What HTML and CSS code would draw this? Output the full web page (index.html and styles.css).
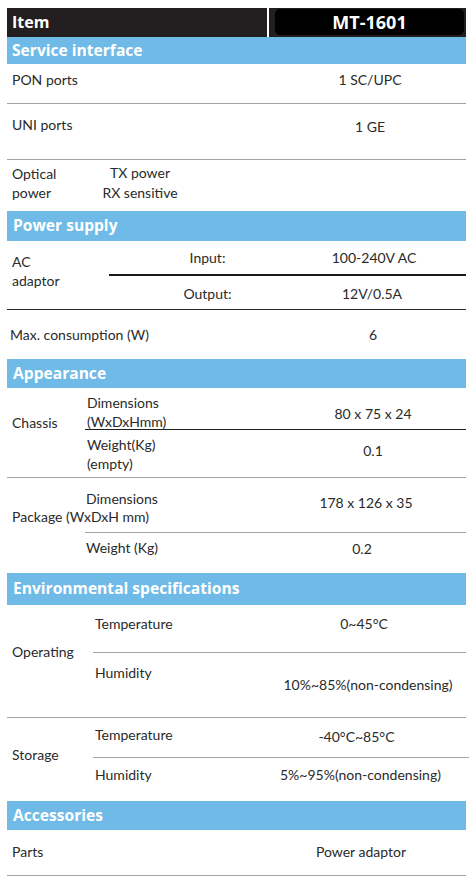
FILE: index.html
```html
<!DOCTYPE html>
<html lang="en">
<head>
<meta charset="utf-8">
<title>MT-1601 Specifications</title>
<link rel="stylesheet" href="styles.css">
</head>
<body>
<div class="sheet">
  <div class="head">
    <div class="head-item">Item</div>
    <div class="head-model"><div class="model-box">MT-1601</div></div>
  </div>

  <div class="bar bar-service">Service interface</div>
  <div class="row row-pon ruled">
    <div class="lab">PON ports</div>
    <div class="val c370">1 SC/UPC</div>
  </div>
  <div class="row row-uni ruled">
    <div class="lab">UNI ports</div>
    <div class="val c370">1 GE</div>
  </div>
  <div class="block block-optical">
    <div class="lab two">Optical<br>power</div>
    <div class="sub two">TX power<br>RX sensitive</div>
  </div>

  <div class="bar bar-power">Power supply</div>
  <div class="block block-ac ruled-dark">
    <div class="lab span2">AC<br>adaptor</div>
    <div class="sub io in heavy">Input:</div>
    <div class="val c374 in heavy">100-240V AC</div>
    <div class="sub io out">Output:</div>
    <div class="val c372 out">12V/0.5A</div>
  </div>
  <div class="row row-max">
    <div class="lab">Max. consumption (W)</div>
    <div class="val c373">6</div>
  </div>

  <div class="bar bar-appear">Appearance</div>
  <div class="block block-chassis ruled">
    <div class="lab span2">Chassis</div>
    <div class="sub dims dark-line">Dimensions<br>(WxDxHmm)</div>
    <div class="val c373 dims-val dark-line">80 x 75 x 24</div>
    <div class="sub wt">Weight(Kg)<br>(empty)</div>
    <div class="val c373 wt-val">0.1</div>
  </div>
  <div class="block block-package">
    <div class="lab pkg">Package (WxDxH mm)</div>
    <div class="sub dims light-line">Dimensions</div>
    <div class="val c366 dims-val light-line">178 x 126 x 35</div>
    <div class="sub wt">Weight (Kg)</div>
    <div class="val c362 wt-val">0.2</div>
  </div>

  <div class="bar bar-env">Environmental specifications</div>
  <div class="block block-env block-operating ruled">
    <div class="lab span2">Operating</div>
    <div class="sub t light-line">Temperature</div>
    <div class="val c364 t-val light-line">0~45°C</div>
    <div class="sub h">Humidity</div>
    <div class="val c368 h-val">10%~85%(non-condensing)</div>
  </div>
  <div class="block block-env block-storage">
    <div class="lab span2">Storage</div>
    <div class="sub t light-line">Temperature</div>
    <div class="val c355 t-val light-line">-40°C~85°C</div>
    <div class="sub h">Humidity</div>
    <div class="val c359 h-val">5%~95%(non-condensing)</div>
  </div>

  <div class="bar bar-acc">Accessories</div>
  <div class="row row-parts ruled">
    <div class="lab">Parts</div>
    <div class="val c361">Power adaptor</div>
  </div>
</div>
</body>
</html>
```

FILE: styles.css
```css
* { box-sizing: border-box; }

html, body {
  margin: 0;
  padding: 0;
  background: #ffffff;
}

body {
  font-family: "Lato", "Liberation Sans", sans-serif;
  font-size: 14px;
  color: #2a2a2a;
}

.sheet {
  width: 459px;
  margin: 8px 0 0 7px;
}

/* ---------- header ---------- */
.head {
  display: flex;
  gap: 2px;
  height: 29px;
  font-family: "Open Sans", "DejaVu Sans", sans-serif;
  font-weight: 700;
  color: #ffffff;
}

.head-item {
  width: 260px;
  background: #231f20;
  padding-left: 5px;
  font-size: 16px;
  line-height: 29px;
}

.head-model {
  flex: 1;
  background: #231f20;
  padding: 1px 2px 2px 6px;
}

.model-box {
  height: 100%;
  background: #000000;
  border-radius: 5px;
  text-align: center;
  font-size: 18px;
  line-height: 26px;
}

/* ---------- section bars ---------- */
.bar {
  background: #6fbae6;
  color: #ffffff;
  font-family: "Open Sans", "DejaVu Sans", sans-serif;
  font-weight: 700;
  font-size: 15.6px;
  padding-left: 6px;
}

.bar-service { height: 27px; line-height: 26px; padding-left: 5px; }
.bar-power   { height: 30px; line-height: 29px; }
.bar-appear  { height: 29px; line-height: 28px; }
.bar-env     { height: 32px; line-height: 31px; }
.bar-acc     { height: 29px; line-height: 28px; }

/* ---------- generic rows ---------- */
.row {
  display: grid;
  grid-template-columns: 273px 1fr;
  line-height: 18px;
}

.ruled { border-bottom: 1px solid #a3a3a3; }
.ruled-dark { border-bottom: 1px solid #2a2a2a; }

.lab { padding-left: 5px; white-space: nowrap; }
.lab.two { line-height: 19px; }

.val {
  text-align: center;
  white-space: nowrap;
  padding-right: 14px;
}

/* value centre positions (column spans x 280–466) */
.c373 { padding-left: 0; padding-right: 0; }
.c374 { padding-left: 2px; padding-right: 0; }
.c372 { padding-right: 2px; }
.c370 { padding-right: 6px; }
.c368 { padding-right: 10px; }
.c366 { padding-right: 14px; }
.c364 { padding-right: 18px; }
.c362 { padding-right: 22px; }
.c361 { padding-right: 24px; }
.c359 { padding-right: 28px; }
.c355 { padding-right: 36px; }

.row-pon { height: 40px; }
.row-pon .lab, .row-pon .val { padding-top: 7px; }

.row-uni { height: 56px; }
.row-uni .lab { padding-top: 12px; }
.row-uni .val { padding-top: 14px; }

.row-max { height: 49px; }
.row-max .lab { padding-top: 16px; padding-left: 3px; }
.row-max .val { padding-top: 16px; }

.row-parts { height: 46px; }
.row-parts .lab, .row-parts .val { padding-top: 13px; }

/* ---------- multi-row blocks ---------- */
.block {
  display: grid;
  grid-template-columns: 78px 195px 1fr;
  line-height: 18px;
}

.span2 { grid-row: 1 / 3; }
.sub { white-space: nowrap; }

.dark-line { border-bottom: 1px solid #1e1e1e; }
.light-line { border-bottom: 1px solid #a3a3a3; }
.heavy { border-bottom: 2px solid #1a1a1a; }

/* optical power */
.block-optical {
  grid-template-columns: 78px 110px 1fr;
  height: 51px;
}
.block-optical .lab { padding-top: 4px; }
.block-optical .sub {
  text-align: center;
  line-height: 20px;
  padding-top: 3px;
}

/* AC adaptor */
.block-ac {
  grid-template-columns: 102px 171px 1fr;
  grid-template-rows: 35px 33px;
}
.block-ac .lab { line-height: 19px; padding-top: 11px; }
.block-ac .io { padding-left: 26px; text-align: center; }
.block-ac .in { padding-top: 8px; }
.block-ac .out { padding-top: 9px; }

/* chassis */
.block-chassis { grid-template-rows: 42px 47px; }
.block-chassis .lab { padding-top: 26px; }
.block-chassis .sub { padding-left: 2px; }
.block-chassis .dims { line-height: 19px; padding-top: 5px; }
.block-chassis .dims-val { padding-top: 17px; }
.block-chassis .wt { line-height: 19px; padding-top: 5px; }
.block-chassis .wt-val { padding-top: 12px; }

/* package */
.block-package { grid-template-rows: 55px 40px; }
.block-package .pkg { grid-row: 1; grid-column: 1; padding-top: 30px; }
.block-package .sub { padding-left: 1px; }
.block-package .dims { padding-top: 12px; }
.block-package .dims-val { padding-top: 16px; }
.block-package .wt { grid-column: 2; padding-top: 6px; }
.block-package .wt-val { padding-top: 7px; }

/* environmental */
.block-env { grid-template-columns: 86px 187px 1fr; }
.block-env .sub { padding-left: 2px; }

.block-operating { grid-template-rows: 48px 64px; }
.block-operating .lab { padding-top: 38px; }
.block-operating .t, .block-operating .t-val { padding-top: 10px; }
.block-operating .h { padding-top: 11px; }
.block-operating .h-val { padding-top: 23px; }

.block-storage { grid-template-rows: 40px 43px; }
.block-storage .lab { padding-top: 28px; }
.block-storage .t { padding-top: 8px; }
.block-storage .t-val { padding-top: 10px; }
.block-storage .h, .block-storage .h-val { padding-top: 8px; }
```
